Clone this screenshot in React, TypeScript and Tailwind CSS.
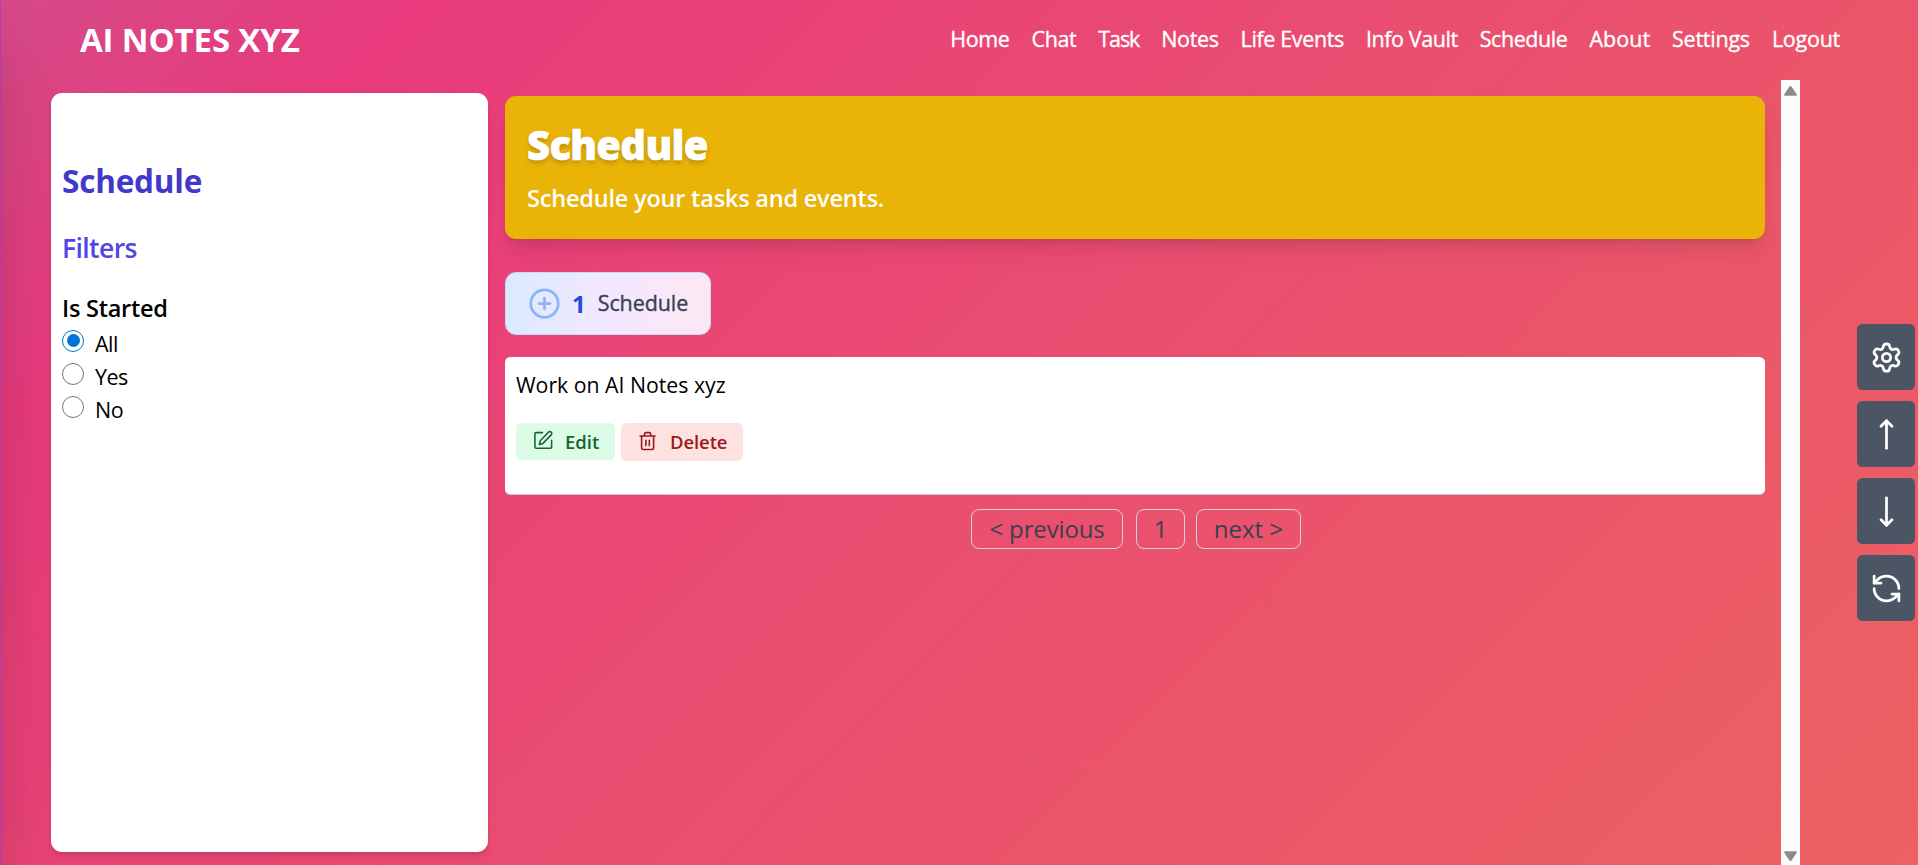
import React from "react";
import { CirclePlus, MoveDown, MoveUp, RefreshCcw, Settings } from "lucide-react";

const navItems = [
  { label: "Home", tracking: "tracking-[-0.37px]" },
  { label: "Chat", tracking: "tracking-[-0.37px]" },
  { label: "Task", tracking: "tracking-[-1.1px]" },
  { label: "Notes", tracking: "tracking-[-0.37px]" },
  { label: "Life Events", tracking: "tracking-[-0.37px]" },
  { label: "Info Vault", tracking: "tracking-[-0.42px]" },
  { label: "Schedule", tracking: "tracking-[-0.42px]" },
  { label: "About", tracking: "tracking-[0px]" },
  { label: "Settings", tracking: "tracking-[-0.24px]" },
  { label: "Logout", tracking: "tracking-[-0.25px]" },
];

function Header() {
  return (
    <header className="flex h-20 shrink-0 items-center justify-between pl-20 pr-[78px] text-white">
      <h1 className="mb-0.5 text-[33px] leading-none font-bold tracking-[-0.15px]">AI NOTES XYZ</h1>
      <nav className="mb-0.5 flex gap-[22px] text-[21.5px] font-medium [-webkit-text-stroke:0.35px_white]">
        {navItems.map((item) => (
          <a key={item.label} className={`whitespace-nowrap ${item.tracking}`}>
            {item.label}
          </a>
        ))}
      </nav>
    </header>
  );
}

function Radio({ label, checked = false }: { label: string; checked?: boolean }) {
  return (
    <label className="flex h-[33px] items-center">
      {checked ? (
        <span className="-mt-[6px] flex size-[22px] items-center justify-center rounded-full border-[1.5px] border-[#0075d7]">
          <span className="size-[13px] rounded-full bg-[#0075d7]" />
        </span>
      ) : (
        <span className="-mt-[6px] size-[22px] rounded-full border-[1.5px] border-[#767676]" />
      )}
      <span className="ml-[11px] mt-px text-[21.5px] tracking-[-0.5px]">{label}</span>
    </label>
  );
}

function Sidebar() {
  return (
    <aside className="ml-[51px] mt-[13px] h-[759px] w-[437px] shrink-0 rounded-[11px] bg-white px-[11px] pt-[66px] shadow-[0_5px_8px_-1px_rgba(0,0,0,0.1),0_3px_5px_-2px_rgba(0,0,0,0.1)]">
      <h2 className="text-[31.5px] leading-[44px] font-bold tracking-[-0.2px] text-[#4338ca]">Schedule</h2>
      <h3 className="mt-[23px] text-[26.5px] leading-[44px] font-semibold tracking-[-0.6px] text-[#4f46e5]">
        Filters
      </h3>
      <p className="mb-[2px] mt-[22px] text-[23.5px] leading-[33px] font-semibold tracking-[-0.25px] text-black">
        Is Started
      </p>
      <Radio label="All" checked />
      <Radio label="Yes" />
      <Radio label="No" />
    </aside>
  );
}

function EditIcon() {
  return (
    <svg
      className="-mt-[3px] size-[22px]"
      viewBox="0 0 22 22"
      fill="none"
      stroke="currentColor"
      strokeWidth="1.6"
      strokeLinecap="round"
      strokeLinejoin="round"
    >
      <path d="M10.5 3.6H4.4a1.5 1.5 0 0 0-1.5 1.5v12.7a1.5 1.5 0 0 0 1.5 1.5h13.7a1.5 1.5 0 0 0 1.5-1.5v-6.5" />
      <path d="M16.4 3.2a1.9 1.9 0 0 1 2.8 2.7l-8.2 8.5-3.7 1.2 1-3.9z" />
    </svg>
  );
}

function TrashIcon() {
  return (
    <svg
      className="-ml-px -mt-[3px] size-[22px]"
      viewBox="0 0 22 22"
      fill="none"
      stroke="currentColor"
      strokeWidth="1.6"
      strokeLinecap="round"
      strokeLinejoin="round"
    >
      <path d="M4.1 6h15M5.6 6v12.1a1.4 1.4 0 0 0 1.4 1.4h9.2a1.4 1.4 0 0 0 1.4-1.4V6M8.5 6V4a1.4 1.4 0 0 1 1.4-1.4h3.4A1.4 1.4 0 0 1 14.7 4v2M9.9 10.2v5.4M13.3 10.2v5.4" />
    </svg>
  );
}

function Main() {
  return (
    <main className="ml-[17px] flex w-[1260px] shrink-0 flex-col pt-4">
      <section className="h-[143px] shrink-0 rounded-[11px] bg-[#eab308] px-[22px] pt-[21px] text-white shadow-[0_14px_21px_-4px_rgba(0,0,0,0.1),0_6px_8px_-5px_rgba(0,0,0,0.1)]">
        <h2 className="text-[40px] leading-[55px] font-extrabold tracking-[-0.7px] [-webkit-text-stroke:0.6px_white] text-shadow-[0_3px_5px_rgba(0,0,0,0.2)]">
          Schedule
        </h2>
        <p className="mt-[7px] text-[23.5px] leading-[39px] font-semibold tracking-[-0.2px]">
          Schedule your tasks and events.
        </p>
      </section>

      <button className="mt-[33px] flex h-[63px] w-[206px] shrink-0 items-center rounded-[11px] border border-[#bfdbfe] bg-linear-to-r from-[#dbeafe] via-[#f3e8ff] to-[#fce7f3] pl-[22px]">
        <CirclePlus className="size-[33px] text-[#8cb4fc]" strokeWidth={2} />
        <span className="ml-[11px] text-[24px] font-bold text-[#1d4ed8]">1</span>
        <span className="ml-[12px] text-[21.5px] font-medium tracking-[-0.1px] text-[#374151] [-webkit-text-stroke:0.35px_#374151]">
          Schedule
        </span>
      </button>

      <article className="mt-[22px] h-[138px] rounded-[5.5px] border-b border-[#c8c8c8] bg-white px-[11px] pt-[11px]">
        <p className="text-[21.25px] leading-[33px] text-black">Work on AI Notes xyz</p>
        <div className="mt-[22px] flex items-start gap-[6px] text-[18.5px] font-semibold">
          <button className="flex h-[37px] w-[99px] items-center rounded-[5.5px] bg-[#dcfce7] pl-4 text-[#166534]">
            <EditIcon />
            <span className="ml-[11px] mt-px">Edit</span>
          </button>
          <button className="flex h-[38px] w-[122px] items-center rounded-[5.5px] bg-[#fee2e2] pl-4 text-[#991b1b]">
            <TrashIcon />
            <span className="ml-[12px] tracking-[-0.1px]">Delete</span>
          </button>
        </div>
      </article>

      <div className="mt-[14px] flex justify-center pl-[2px] text-[24px] text-[#374151]">
        <button className="h-10 w-[152px] rounded-[8px] border border-[#d1d5db] leading-none tracking-[-0.15px]">
          &lt; previous
        </button>
        <button className="ml-[13px] h-10 w-[49px] rounded-[8px] border border-[#d1d5db] leading-none">1</button>
        <button className="ml-[11px] h-10 w-[105px] rounded-[8px] border border-[#d1d5db] leading-none">next &gt;</button>
      </div>
    </main>
  );
}

function ScrollTrack() {
  return (
    <div className="ml-4 flex w-[19px] shrink-0 flex-col items-center justify-between bg-[#fcfcfc] pb-1 pt-[6px]">
      <svg className="h-[10px] w-[13px]" viewBox="0 0 13 10" fill="#8b8b8b">
        <path d="M5.3.8a1.5 1.5 0 0 1 2.4 0l4.9 7.2a1.1 1.1 0 0 1-.9 1.8H1.3A1.1 1.1 0 0 1 .4 8z" />
      </svg>
      <svg className="h-[10px] w-[13px]" viewBox="0 0 13 10" fill="#8b8b8b">
        <path d="M5.3 9.2a1.5 1.5 0 0 0 2.4 0L12.6 2a1.1 1.1 0 0 0-.9-1.8H1.3A1.1 1.1 0 0 0 .4 2z" />
      </svg>
    </div>
  );
}

function FloatingTools() {
  const icons = [Settings, MoveUp, MoveDown, RefreshCcw];
  return (
    <div className="absolute right-[3px] top-[324px] flex flex-col gap-[11px]">
      {icons.map((Icon, i) => (
        <button key={i} className="flex h-[66px] w-[58px] items-center justify-center rounded-[5.5px] bg-[#4b5563] text-white">
          <Icon className="size-[33px]" strokeWidth={2} />
        </button>
      ))}
    </div>
  );
}

export default function App() {
  return (
    <div className="relative isolate flex h-[865px] w-[1918px] flex-col overflow-hidden bg-[linear-gradient(135deg,#d54a88_0%,#e83a7c_15%,#ea4f6f_54%,#ec6161_100%)] font-['Open_Sans','Noto_Sans',sans-serif]">
      <div className="absolute -left-[439px] top-0 -z-10 h-full w-[440px] bg-[#b03aba] shadow-[0_34px_69px_-16px_rgba(0,0,0,0.25)]" />
      <Header />
      <div className="flex min-h-0 flex-1">
        <Sidebar />
        <Main />
        <ScrollTrack />
      </div>
      <FloatingTools />
    </div>
  );
}
